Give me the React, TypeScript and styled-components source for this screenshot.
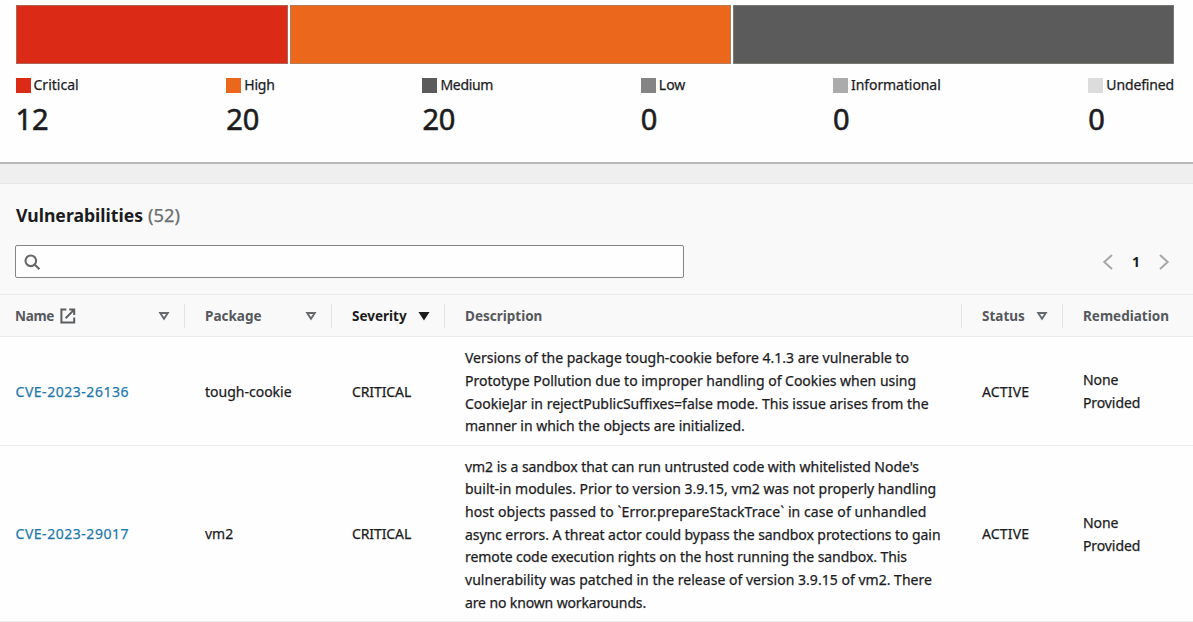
import React from 'react';
import styled, { createGlobalStyle } from 'styled-components';

const GlobalStyle = createGlobalStyle`
  * { box-sizing: border-box; }
  body {
    margin: 0;
    background: #efefef;
    color: #1c1c1e;
    font-family: 'Noto Sans', sans-serif;
    font-size: 14px;
    -webkit-text-stroke: 0.25px currentColor;
    overflow: hidden;
  }
`;

const Summary = styled.section`
  height: 164px;
  padding: 5px 19px 0 15.5px;
  background: #fefefe;
  border-bottom: 2px solid #b9b9b9;
`;

const Bar = styled.div`
  display: flex;
  gap: 2px;
  height: 59px;
  padding-left: 0.5px;
`;

const Segment = styled.div<{ $share: number; $color: string }>`
  flex: ${(p) => p.$share} 1 0;
  background: ${(p) => p.$color};
  border: 1px solid rgba(140, 140, 130, 0.6);
`;

const Legend = styled.ul`
  display: flex;
  justify-content: space-between;
  margin: 13px 0 0;
  padding: 0;
  list-style: none;
`;

const LegendLabel = styled.div<{ $spacing: number }>`
  display: flex;
  align-items: center;
  gap: 3px;
  height: 16px;
  line-height: 16px;
  letter-spacing: ${(p) => p.$spacing}px;
`;

const Swatch = styled.span<{ $color: string }>`
  width: 15px;
  height: 15px;
  background: ${(p) => p.$color};
`;

const Count = styled.div`
  margin-top: 7px;
  font-size: 29px;
  line-height: 38px;
  letter-spacing: -0.2px;
  -webkit-text-stroke-width: 0.6px;
`;

const Panel = styled.section`
  margin-top: 19px;
  border-top: 1px solid #e8e8e8;
  background: #f9f9f9;
`;

const Title = styled.h2`
  display: flex;
  gap: 5px;
  margin: 0;
  padding: 19px 0 0 16px;
  font-size: 17.6px;
  font-weight: 700;
  line-height: 24px;
  -webkit-text-stroke-width: 0;
`;

const Total = styled.span`
  color: #6b6e70;
  font-size: 18.3px;
  font-weight: 400;
  -webkit-text-stroke-width: 0.25px;
`;

const Toolbar = styled.div`
  display: flex;
  align-items: center;
  justify-content: space-between;
  padding: 18px 23px 16px 15px;
`;

const SearchBox = styled.label`
  display: flex;
  align-items: center;
  width: 669px;
  height: 33px;
  padding-left: 8px;
  border: 1px solid #858585;
  border-radius: 2px;
  background: #fefefe;
`;

const SearchInput = styled.input`
  flex: 1;
  border: 0;
  outline: 0;
  background: transparent;
  font: inherit;
`;

const Pager = styled.nav`
  display: flex;
  align-items: center;
  gap: 18px;
  font-weight: 700;
  -webkit-text-stroke-width: 0;
`;

const Row = styled.div<{ $height?: number }>`
  display: grid;
  grid-template-columns: 185px 147px 113px 517px 101px 1fr;
  align-items: center;
  height: ${(p) => p.$height ?? 43}px;
  background: #fefefe;
  border-bottom: 1px solid #ebebeb;
`;

const HeaderRow = styled(Row)`
  background: #f9f9f9;
  border-top: 1px solid #ebebeb;
`;

const HeaderCell = styled.div<{ $active?: boolean; $spacing?: number }>`
  display: flex;
  align-items: center;
  justify-content: space-between;
  height: 24px;
  padding: 0 14px 0 20px;
  border-right: 1px solid #e3e3e3;
  color: ${(p) => (p.$active ? '#1c1c1e' : '#55585c')};
  font-size: 13.5px;
  font-weight: 700;
  letter-spacing: ${(p) => p.$spacing ?? 0}px;
  -webkit-text-stroke-width: 0;
  &:first-child { padding-left: 15px; }
  &:last-child { border-right: 0; }
`;

const HeaderName = styled.span`
  display: flex;
  align-items: center;
  gap: 6px;
`;

const Cell = styled.div<{ $spacing?: number }>`
  padding: 2px 0 0 20px;
  line-height: 22.7px;
  white-space: nowrap;
  letter-spacing: ${(p) => p.$spacing ?? 0}px;
  &:first-child { padding-left: 15.5px; }
`;

const Description = styled(Cell)`
  padding-top: 3px;
`;

const Line = styled.span<{ $spacing: number }>`
  display: block;
  letter-spacing: ${(p) => p.$spacing}px;
`;

const CveLink = styled.a`
  color: #1f7aac;
  letter-spacing: 0.53px;
  text-decoration: none;
`;

const SortIcon = ({ filled = false }: { filled?: boolean }) => (
  <svg width="12" height="12" viewBox="0 0 12 12" aria-hidden="true">
    <path
      d="M2.2 3h7.6L6 8.8z"
      fill={filled ? '#1c1c1e' : 'none'}
      stroke={filled ? '#1c1c1e' : '#66696b'}
      strokeWidth="1.9"
    />
  </svg>
);

const ExternalIcon = () => (
  <svg width="16" height="16" viewBox="0 0 16 16" fill="none" stroke="#5b5e61" strokeWidth="2" aria-hidden="true">
    <path d="M6.4 1.6H1.4v12.8h12.8V9.6M9.2 1.6h5V7M14.2 1.6L5.6 10.2" />
  </svg>
);

const SearchIcon = () => (
  <svg width="16" height="16" viewBox="0 0 16 16" fill="none" stroke="#646769" strokeWidth="2.1" aria-hidden="true">
    <circle cx="6.8" cy="6.8" r="5.3" />
    <path d="M10.6 10.6l4.8 4.6" />
  </svg>
);

const Chevron = ({ right = false }: { right?: boolean }) => (
  <svg width="12" height="16" viewBox="0 0 12 16" fill="none" stroke="#a5a7a8" strokeWidth="2" aria-hidden="true">
    <path d={right ? 'M2 1l7.7 7L2 15' : 'M10 1L2.3 8l7.7 7'} />
  </svg>
);

const severities = [
  { label: 'Critical', count: 12, share: 271, color: '#db2b17', spacing: 0 },
  { label: 'High', count: 20, share: 441, color: '#eb671c', spacing: -0.2 },
  { label: 'Medium', count: 20, share: 441, color: '#5b5b5b', spacing: -0.3 },
  { label: 'Low', count: 0, share: 0, color: '#848484', spacing: 0 },
  { label: 'Informational', count: 0, share: 0, color: '#ababab', spacing: -0.08 },
  { label: 'Undefined', count: 0, share: 0, color: '#dcdcdc', spacing: -0.15 },
];

const vulnerabilities: {
  id: string;
  pkg: string;
  height: number;
  description: [string, number][];
}[] = [
  {
    id: 'CVE-2023-26136',
    pkg: 'tough-cookie',
    height: 109,
    description: [
      ['Versions of the package tough-cookie before 4.1.3 are vulnerable to', 0],
      ['Prototype Pollution due to improper handling of Cookies when using', -0.01],
      ['CookieJar in rejectPublicSuffixes=false mode. This issue arises from the', -0.01],
      ['manner in which the objects are initialized.', -0.03],
    ],
  },
  {
    id: 'CVE-2023-29017',
    pkg: 'vm2',
    height: 176,
    description: [
      ["vm2 is a sandbox that can run untrusted code with whitelisted Node's", -0.045],
      ['built-in modules. Prior to version 3.9.15, vm2 was not properly handling', 0.01],
      ['host objects passed to `Error.prepareStackTrace` in case of unhandled', 0.09],
      ['async errors. A threat actor could bypass the sandbox protections to gain', -0.06],
      ['remote code execution rights on the host running the sandbox. This', -0.07],
      ['vulnerability was patched in the release of version 3.9.15 of vm2. There', 0.025],
      ['are no known workarounds.', -0.125],
    ],
  },
];

export default function App() {
  return (
    <>
      <GlobalStyle />
      <Summary>
        <Bar>
          {severities
            .filter((s) => s.count > 0)
            .map((s) => (
              <Segment key={s.label} $share={s.share} $color={s.color} />
            ))}
        </Bar>
        <Legend>
          {severities.map((s) => (
            <li key={s.label}>
              <LegendLabel $spacing={s.spacing}>
                <Swatch $color={s.color} />
                {s.label}
              </LegendLabel>
              <Count>{s.count}</Count>
            </li>
          ))}
        </Legend>
      </Summary>
      <Panel>
        <Title>
          Vulnerabilities <Total>(52)</Total>
        </Title>
        <Toolbar>
          <SearchBox>
            <SearchIcon />
            <SearchInput aria-label="Search vulnerabilities" />
          </SearchBox>
          <Pager>
            <Chevron />
            <span>1</span>
            <Chevron right />
          </Pager>
        </Toolbar>
        <HeaderRow>
          <HeaderCell $spacing={-0.3}>
            <HeaderName>
              Name <ExternalIcon />
            </HeaderName>
            <SortIcon />
          </HeaderCell>
          <HeaderCell>Package <SortIcon /></HeaderCell>
          <HeaderCell $active>Severity <SortIcon filled /></HeaderCell>
          <HeaderCell>Description</HeaderCell>
          <HeaderCell>Status <SortIcon /></HeaderCell>
          <HeaderCell>Remediation</HeaderCell>
        </HeaderRow>
        {vulnerabilities.map((v) => (
          <Row key={v.id} $height={v.height}>
            <Cell><CveLink>{v.id}</CveLink></Cell>
            <Cell>{v.pkg}</Cell>
            <Cell $spacing={-0.1}>CRITICAL</Cell>
            <Description>
              {v.description.map(([text, spacing]) => (
                <Line key={text} $spacing={spacing}>{text}</Line>
              ))}
            </Description>
            <Cell $spacing={0.15}>ACTIVE</Cell>
            <Cell $spacing={-0.1}>
              None
              <br />
              Provided
            </Cell>
          </Row>
        ))}
      </Panel>
    </>
  );
}
